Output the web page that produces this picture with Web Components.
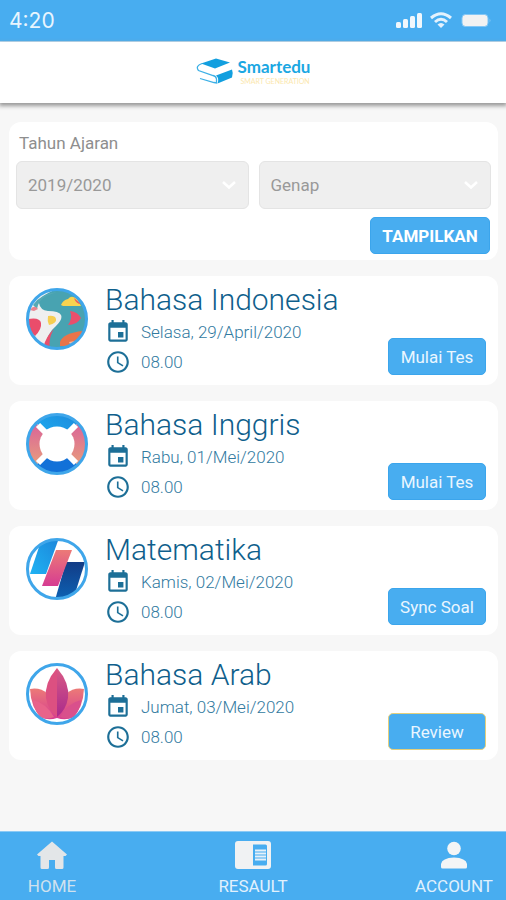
<!DOCTYPE html>
<html lang="id">
<head>
<meta charset="utf-8">
<meta name="viewport" content="width=device-width, initial-scale=1">
<title>Smartedu</title>
<style>
  html, body { margin: 0; }
  body {
    --blue: #48adf0;
    --ink: #0f5f8c;
    font-family: Roboto, "Liberation Sans", sans-serif;
    background: #f7f7f7;
  }
</style>
</head>
<body>
<edu-app></edu-app>

<script>
const define = (name, html, setup) => {
  const tpl = document.createElement('template');
  tpl.innerHTML = html;
  customElements.define(name, class extends HTMLElement {
    constructor() {
      super();
      this.attachShadow({ mode: 'open' }).append(tpl.content.cloneNode(true));
    }
    connectedCallback() { if (setup) setup(this, this.shadowRoot); }
  });
};

define('status-bar', `
  <style>
    :host { display: flex; align-items: center; justify-content: space-between; height: 41px;
      padding: 0 15px 0 9px; background: var(--blue); color: #e9f5fe;
      border-bottom: 1px solid #b5dcf8; }
    time { font: 400 21px Inter, sans-serif; }
    div { display: flex; align-items: center; gap: 7px; }
    svg { display: block; }
  </style>
  <time>4:20</time>
  <div>
    <svg width="26" height="18" viewBox="0 0 26 18" fill="#f0f7fc">
      <rect x="0" y="10" width="5" height="6" rx="1.5"/><rect x="7" y="7" width="5" height="9" rx="1.5"/>
      <rect x="14" y="4" width="5" height="12" rx="1.5"/><rect x="21" y="1" width="5" height="15" rx="1.5"/>
    </svg>
    <svg width="24" height="18" viewBox="0 0 24 18" fill="none" stroke="#e4f2fd" stroke-width="3">
      <path d="M2 6Q12-2.500 22 6"/><path d="M6 10Q12 4.500 18 10"/>
      <path d="M8.500 12.500Q12 9.500 15.500 12.500L12 16z" fill="#e4f2fd" stroke="none"/>
    </svg>
    <svg width="31" height="18" viewBox="0 0 31 18">
      <rect x="2" y="2.500" width="26" height="12" rx="3.500" fill="#f2f2f2" stroke="#82c6f5"/>
      <path d="M29.500 6.500q2 2 0 4z" fill="#82c6f5"/>
    </svg>
  </div>
`);

define('brand-header', `
  <style>
    :host { display: flex; align-items: center; justify-content: center; gap: 4px; height: 61px;
      box-sizing: border-box; padding-bottom: 2px; background: #fff;
      box-shadow: 0 2px 4px 1px #9a9a9a; position: relative; }
    svg { display: block; margin-bottom: 2px; }
    div { display: flex; flex-direction: column; }
    strong { font: 700 17px/20px Lato, sans-serif; color: #1ba7e2; }
    small { font: 400 7px/9px Lato, sans-serif; color: #fbe7ae; padding-left: 3px; }
  </style>
  <svg width="38" height="26" viewBox="0 0 38 26">
    <path d="M5 5.500L20 0.500 34 4.500 19 10.500z" fill="#129fdf"/>
    <path d="M6 5.500Q-1 8 2.500 12.500L17 17.500Q20 18 20.500 21V25L18 24.500 4 20.500" fill="none" stroke="#3db0e6" stroke-width="1.300"/>
    <path d="M20 17.500L36 11.500Q37.500 15 36 19.500L21.500 25.500Q23.500 20 20 17.500z" fill="#129fdf"/>
  </svg>
  <div><strong>Smartedu</strong><small>SMART GENERATION</small></div>
`);

define('action-button', `
  <style>
    :host { display: block; }
    button { display: block; width: 100%; height: 37px; padding: 0 10px; border: 1px solid #3ba5ec;
      border-radius: 5px; background: var(--blue); color: #eaf6ff; font: 400 17px Roboto, sans-serif; white-space: nowrap; }
    :host([strong]) button { font-weight: 700; color: #fff; }
    :host([outlined]) button { border-color: #e3cf7c; }
  </style>
  <button type="button"><slot></slot></button>
`);

define('filter-panel', `
  <style>
    :host { display: grid; grid-template-columns: 1fr 1fr; column-gap: 10px; background: #fff;
      border-radius: 12px; padding: 8px 7px 6px; }
    label { grid-column: 1 / -1; padding-left: 3px; font-size: 17px; line-height: 26px; margin-bottom: 5px; color: #8e8e8e; }
    .field { display: grid; align-items: center; }
    .field > * { grid-area: 1 / 1; }
    select { appearance: none; width: 100%; height: 48px; padding: 0 11px; border: 1px solid #e4e4e4;
      border-radius: 6px; background: #efefef; color: #999; font: 400 17px Roboto, sans-serif; }
    svg { justify-self: end; margin-right: 12px; pointer-events: none; }
    action-button { grid-column: 1 / -1; justify-self: end; width: 120px; margin: 8px 1px 0 0; }
  </style>
  <label for="year">Tahun Ajaran</label>
  <div class="field">
    <select id="year"><option>2019/2020</option><option>2018/2019</option></select>
    <svg width="16" height="10" viewBox="0 0 16 10" fill="none" stroke="#fff" stroke-width="2.500"><path d="M2 2l6 5.500L14 2"/></svg>
  </div>
  <div class="field">
    <select aria-label="Semester"><option>Genap</option><option>Ganjil</option></select>
    <svg width="16" height="10" viewBox="0 0 16 10" fill="none" stroke="#fff" stroke-width="2.500"><path d="M2 2l6 5.500L14 2"/></svg>
  </div>
  <action-button strong>TAMPILKAN</action-button>
`);

const badges = {
  abstract: `<g clip-path="url(#c)"><rect width="62" height="62" fill="#48a3b1"/>
    <path d="M0 0H34Q12 8 13 15T22 23Q33 23 35 27T30 38Q20 46 19 62H0z" fill="#efefef"/>
    <path d="M7 17Q14 6 31 4L20 8Q12 13 11 21z" fill="#55a9b5"/>
    <path d="M4 22Q8 16 12 21L8 23z" fill="#e8838f"/>
    <path d="M2 31Q14 29 15 35T9 48Q4 46 2 31z" fill="#ea4d6b"/>
    <path d="M22 28Q29 27 30 31T23 37Q21 33 22 28z" fill="#f6ce51"/>
    <path d="M35 17Q37 12 42 11Q46 6 52 12L55 18H37z" fill="#f9d34f"/>
    <path d="M48 10L55 16Q50 16 48 10z" fill="#e85b62"/>
    <path d="M44 23Q52 24 55 30Q51 37 42 37Q47 30 44 23z" fill="#e94f6c"/>
    <path d="M28 41Q20 48 17 60L24 62Q22 50 28 41z" fill="#e94f6c"/>
    <path d="M34 54Q37 45 57 43L50 58H34z" fill="#e9744a"/>
    <path d="M43 54l6-1-4 5z" fill="#f4b7a0"/></g>`,
  ring: `<g clip-path="url(#c)"><rect width="62" height="62" fill="#fff"/>
    <path d="M31 31L8 8Q31-16 54 8z" fill="url(#t)"/><path d="M31 31L8 54Q31 78 54 54z" fill="#1271d8"/>
    <path d="M31 31L8 8Q-16 31 8 54zM31 31L54 8Q78 31 54 54z" fill="url(#p)"/></g>
    <path d="M12 12L50 50M50 12L12 50" stroke="#fff" stroke-width="6"/>
    <circle cx="31" cy="31" r="17.500" fill="#fff"/>`,
  bars: `<g clip-path="url(#c)"><rect width="62" height="62" fill="#fff"/>
    <path d="M16 0H33L20 36H4z" fill="url(#t)"/><path d="M40 24H59L47 62H29z" fill="url(#n)"/>
    <path d="M30 12H46L32 48H16z" fill="url(#k)"/></g>`,
  leaf: `<g clip-path="url(#c)"><rect width="62" height="62" fill="#fff"/>
    <path d="M4 26Q14 24 22 31L31 44V55Q22 58 15 54Q5 45 4 26z" fill="url(#k)"/>
    <path d="M58 26Q48 24 40 31L31 44V55Q40 58 47 54Q57 45 58 26z" fill="url(#k)"/>
    <path d="M7 37Q20 40 28 54Q20 57 14 54Q8 47 7 37z" fill="#e8638a"/>
    <path d="M55 37Q42 40 34 54Q42 57 48 54Q54 47 55 37z" fill="#d9508c"/>
    <path d="M31 5Q18 20 20 35Q22 47 31 54z" fill="#dc5081"/>
    <path d="M31 5Q44 20 42 35Q40 47 31 54z" fill="url(#m)"/></g>`
};

define('subject-badge', `
  <style>:host { display: block; } svg { display: block; }</style>
  <svg width="62" height="62" viewBox="0 0 62 62" aria-hidden="true">
    <defs>
      <clipPath id="c"><circle cx="31" cy="31" r="29"/></clipPath>
      <linearGradient id="t" x1="1" y1="0" x2="0" y2="1"><stop offset="0" stop-color="#1c86da"/><stop offset="1" stop-color="#1fb2f3"/></linearGradient>
      <linearGradient id="p" x1="0" y1="0" x2="0" y2="1"><stop offset="0" stop-color="#d9609a"/><stop offset="1" stop-color="#e8a07c"/></linearGradient>
      <linearGradient id="k" x1="0" y1="0" x2="0" y2="1"><stop offset="0" stop-color="#ec7a77"/><stop offset="1" stop-color="#d63c92"/></linearGradient>
      <linearGradient id="n" x1="0" y1="0" x2="0" y2="1"><stop offset="0" stop-color="#123c86"/><stop offset="1" stop-color="#0d62b4"/></linearGradient>
      <linearGradient id="m" x1="0" y1="0" x2="0" y2="1"><stop offset="0" stop-color="#d95a85"/><stop offset="1" stop-color="#a92a8c"/></linearGradient>
    </defs>
    <g id="art"></g>
    <circle cx="31" cy="31" r="29.500" fill="none" stroke="#3fa6ea" stroke-width="3"/>
  </svg>
`, (host, root) => { root.getElementById('art').innerHTML = badges[host.getAttribute('art')] || ''; });

define('exam-card', `
  <style>
    :host { display: grid; grid-template-columns: 62px 1fr 98px; align-items: start; column-gap: 17px;
      padding: 7px 12px 8px 17px; background: #fff; border-radius: 12px; }
    .badge { margin-top: 5px; }
    .info { display: grid; min-width: 0; }
    h2 { margin: 0; font-size: 30px; line-height: 34px; font-weight: 300; color: var(--ink); white-space: nowrap; }
    p { display: flex; align-items: center; gap: 10px; margin: 0; height: 30px; font-size: 17px; font-weight: 300;
      color: #327a9f; white-space: nowrap; }
    svg { flex: none; fill: #1d6f97; }
    .action { align-self: end; margin-bottom: 2px; }
  </style>
  <div class="badge"><slot name="badge"></slot></div>
  <div class="info">
    <h2><slot name="title"></slot></h2>
    <p><svg width="26" height="26" viewBox="0 0 24 24"><path d="M17 12h-5v5h5v-5zM16 1v2H8V1H6v2H5c-1.110 0-1.990.9-1.990 2L3 19c0 1.100.89 2 2 2h14c1.100 0 2-.9 2-2V5c0-1.100-.9-2-2-2h-1V1h-2zm3 18H5V8h14v11z"/></svg><slot name="date"></slot></p>
    <p><svg width="26" height="26" viewBox="0 0 24 24"><path d="M12 2C6.480 2 2 6.480 2 12s4.480 10 10 10 10-4.480 10-10S17.520 2 12 2zm0 18c-4.420 0-8-3.580-8-8s3.580-8 8-8 8 3.580 8 8-3.580 8-8 8zm.5-13H11v6l5.250 3.150.75-1.230-4.500-2.670z"/></svg><slot name="time"></slot></p>
  </div>
  <div class="action"><slot name="action"></slot></div>
`);

const tabIcons = {
  home: '<path fill="#e3e6e8" d="M18 0.500L33 13.500 31.500 15H29.500V26.500Q29.500 28 28 28H22.500Q21 28 21 26.500V19H15V26.500Q15 28 13.500 28H8Q6.500 28 6.500 26.500V15H4.500L3 13.500z"/>',
  result: '<rect width="36" height="28" rx="3" fill="#f0f2f3"/><path fill="#48adf0" d="M18 3.500H30.500Q32 3.500 32 5V23Q32 24.500 30.500 24.500H18z"/><path stroke="#e6f1f9" stroke-width="2" d="M20 9.500H31M20 12.500H31M20 15.500H31M20 18.500H31"/>',
  account: '<circle cx="18" cy="7.500" r="6.800" fill="#f3f5f6"/><path fill="#f3f5f6" d="M5 23Q6 17 18 16.500Q30 17 31 23V26Q31 27.500 29.500 27.500H6.500Q5 27.500 5 26z"/>'
};

define('tab-item', `
  <style>
    :host { display: block; width: 78px; }
    a { display: flex; flex-direction: column; align-items: center; gap: 7px; color: #e1f1fd; text-decoration: none;
      font-size: 17px; line-height: 20px; }
    :host([current]) a { color: #cfe1ee; }
    svg { display: block; }
  </style>
  <a href="#"><svg width="36" height="28" viewBox="0 0 36 28" aria-hidden="true"></svg><slot></slot></a>
`, (host, root) => { root.querySelector('svg').innerHTML = tabIcons[host.getAttribute('icon')]; });

define('tab-bar', `
  <style>
    :host { display: block; background: var(--blue); border-top: 1px solid #8ccaf5; }
    nav { display: flex; justify-content: space-between; padding: 9px 13px 4px; }
  </style>
  <nav><slot></slot></nav>
`);

define('edu-app', `
  <style>
    :host { display: flex; flex-direction: column; min-height: 100vh; }
    main { flex: 1; display: flex; flex-direction: column; gap: 16px; padding: 19px 8px 16px 9px; }
  </style>
  <status-bar></status-bar>
  <brand-header></brand-header>
  <main>
    <filter-panel></filter-panel>
    <exam-card><subject-badge slot="badge" art="abstract"></subject-badge><span slot="title">Bahasa Indonesia</span><span slot="date">Selasa, 29/April/2020</span><span slot="time">08.00</span><action-button slot="action">Mulai Tes</action-button></exam-card>
    <exam-card><subject-badge slot="badge" art="ring"></subject-badge><span slot="title">Bahasa Inggris</span><span slot="date">Rabu, 01/Mei/2020</span><span slot="time">08.00</span><action-button slot="action">Mulai Tes</action-button></exam-card>
    <exam-card><subject-badge slot="badge" art="bars"></subject-badge><span slot="title">Matematika</span><span slot="date">Kamis, 02/Mei/2020</span><span slot="time">08.00</span><action-button slot="action">Sync Soal</action-button></exam-card>
    <exam-card><subject-badge slot="badge" art="leaf"></subject-badge><span slot="title">Bahasa Arab</span><span slot="date">Jumat, 03/Mei/2020</span><span slot="time">08.00</span><action-button slot="action" outlined>Review</action-button></exam-card>
  </main>
  <tab-bar>
    <tab-item icon="home" current>HOME</tab-item>
    <tab-item icon="result">RESAULT</tab-item>
    <tab-item icon="account">ACCOUNT</tab-item>
  </tab-bar>
`);
</script>
</body>
</html>
